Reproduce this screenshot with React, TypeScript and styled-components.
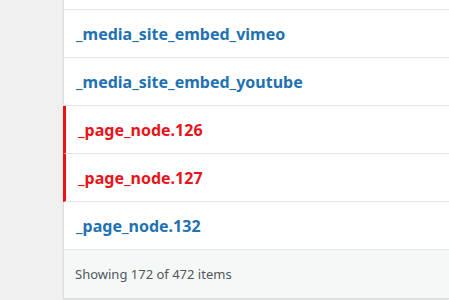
import React from "react";
import styled, { createGlobalStyle } from "styled-components";

const Global = createGlobalStyle`
  html, body { margin: 0; padding: 0; background: #f0f0f1; }
  body { font-family: "Noto Sans", "Open Sans", sans-serif; overflow: hidden; }
`;

const Page = styled.div`
  display: flex;
  padding-left: 63px;
  height: 300px;
`;

const Panel = styled.div`
  flex: 1;
  background: #fff;
  border-bottom: 1px solid #dcdcde;
  box-shadow: 0 1px 2px rgba(0,0,0,0.06);
  display: flex;
  flex-direction: column;
  align-self: flex-start;
`;

const TopCap = styled.div`
  height: 9px;
  border-left: 1px solid #dcdcde;
  border-bottom: 1px solid #e5e5e7;
`;

const Row = styled.div<{ $flag?: boolean }>`
  height: 47px;
  border-bottom: 1px solid #e5e5e7;
  border-left: ${p => (p.$flag ? "3px solid #ee1111" : "1px solid #dcdcde")};
  display: flex;
  align-items: center;
  padding-left: 12px;
`;

const Name = styled.a<{ $flag?: boolean }>`
  font-weight: 700;
  font-size: 16px;
  color: ${p => (p.$flag ? "#e8141b" : "#2271b1")};
  text-decoration: none;
`;

const Footer = styled.div`
  height: 48px;
  background: #f6f7f7;
  border-left: 1px solid #dcdcde;
  display: flex;
  align-items: center;
  padding-left: 11px;
  font-size: 13px;
  color: #50575e;
`;

const rows = [
  { name: "_media_site_embed_vimeo", flag: false },
  { name: "_media_site_embed_youtube", flag: false },
  { name: "_page_node.126", flag: true },
  { name: "_page_node.127", flag: true },
  { name: "_page_node.132", flag: false },
];

export default function App() {
  return (
    <>
      <Global />
      <Page>
        <Panel>
          <TopCap />
          {rows.map(r => (
            <Row key={r.name} $flag={r.flag}>
              <Name $flag={r.flag}>{r.name}</Name>
            </Row>
          ))}
          <Footer>Showing 172 of 472 items</Footer>
        </Panel>
      </Page>
    </>
  );
}
